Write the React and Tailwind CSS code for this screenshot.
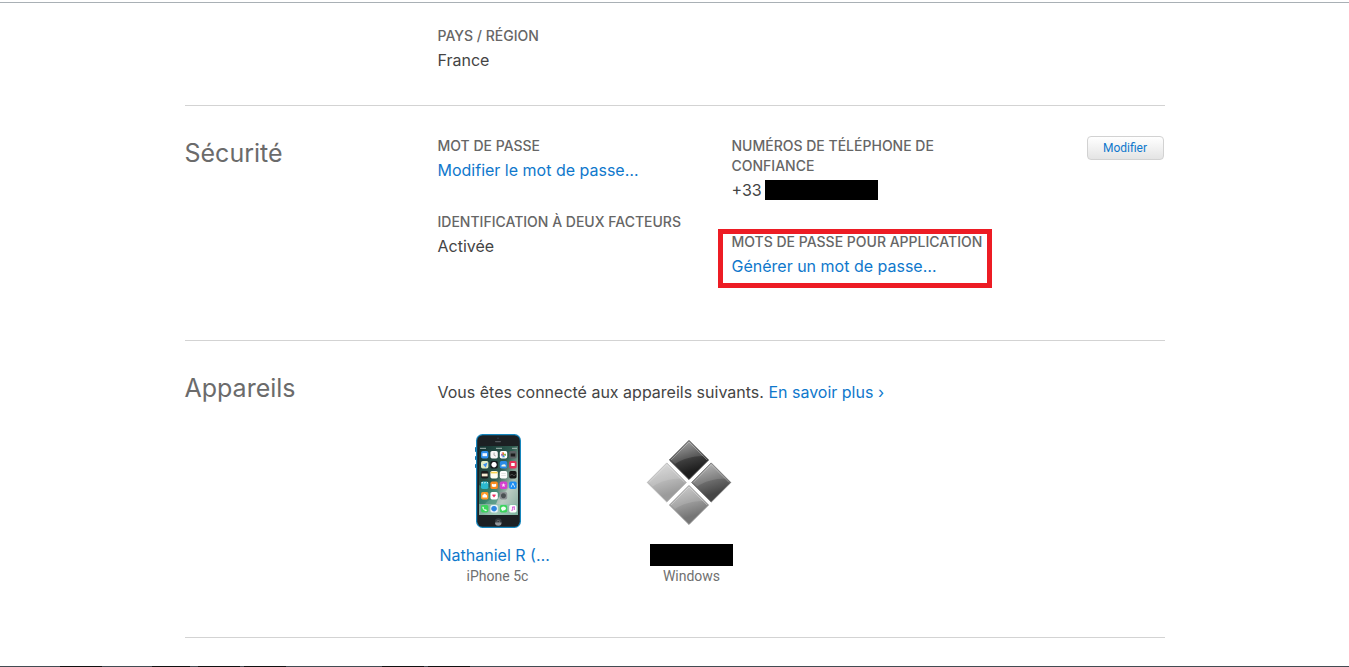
const appIcons = [
  // row 1
  { x: 16, y: 26, fill: '#2f8fee', inner: '#f4f8ff', shape: 'M1.5 2.2H6V5.2H1.5Z' },
  { x: 25.4, y: 26, fill: '#f6f6f6', inner: '#8f8f8f', shape: 'M3.4 1.5H4V3.8L5.6 5L5.2 5.5L3.2 4Z' },
  { x: 34.8, y: 26, fill: '#ffffff', inner: '#f0a020', shape: 'M3.7 1L5 3.7L3.7 6.4L2.4 3.7Z' },
  { x: 44.2, y: 26, fill: '#5d6164', inner: '#1c1c1c', shape: 'M1.5 2.5H6V5.5H1.5Z' },
  // row 2
  { x: 16, y: 36, fill: '#dfe9c4', inner: '#3b8ef0', shape: 'M2 3.5L6.5 1.5L4.8 6.5Z' },
  { x: 25.4, y: 36, fill: '#15191c', inner: '#ffffff', shape: 'M3.7 1A2.7 2.7 0 1 1 3.6 1Z' },
  { x: 34.8, y: 36, fill: '#2a8be8', inner: '#f4f6e4', shape: 'M1.5 5.5Q1.5 3.5 3.2 3.6Q5.8 2.4 6.2 5.5Z' },
  { x: 44.2, y: 36, fill: '#e8305a', inner: '#ffffff', shape: 'M2 2H5.5V5H2Z' },
  // row 3
  { x: 16, y: 46, fill: '#1c1c1c', inner: '#f3ead0', shape: 'M0.8 2.6H6.6V5.4H0.8Z' },
  { x: 25.4, y: 46, fill: '#fffdf0', inner: '#f6d14f', shape: 'M0.3 0.8H7.1V2.4H0.3Z' },
  { x: 34.8, y: 46, fill: '#fdfdfd', inner: '#c9c9c9', shape: 'M1.5 2H6V2.5H1.5ZM1.5 4.5H6V5H1.5Z' },
  { x: 44.2, y: 46, fill: '#161616', inner: '#7b7b7b', shape: 'M0.8 4L3 3.2L5 4.4L6.6 3V3.6L5 5L3 3.8L0.8 4.6Z' },
  // row 4
  { x: 16, y: 56.5, fill: '#2cb9cf', inner: '#eef7f8', shape: 'M0.5 0.6H2L1 2.4ZM3.4 0.6H4.8L3.8 2.4ZM6 0.6H7L6.2 2.4Z' },
  { x: 25.4, y: 56.5, fill: '#fb8a1c', inner: '#ffffff', shape: 'M1.4 2.2L3.5 2.8L5.8 2.2V5L3.5 5.6L1.4 5Z' },
  { x: 34.8, y: 56.5, fill: '#d63fd0', inner: '#fbe9fa', shape: 'M3.7 1.5L4.3 3H5.8L4.6 4L5 5.6L3.7 4.7L2.4 5.6L2.8 4L1.6 3H3.1Z' },
  { x: 44.2, y: 56.5, fill: '#1b8df3', inner: '#e7f4ff', shape: 'M3.4 1.4H4L6 5.8H5.2L3.7 2.6L2.2 5.8H1.4Z' },
  // row 5
  { x: 16, y: 67, fill: '#fd9b2a', inner: '#ffffff', shape: 'M3.7 1.6L6 3.4V5.6H1.4V3.4Z' },
  { x: 25.4, y: 67, fill: '#ffffff', inner: '#f02f62', shape: 'M3.6 5.6L1.8 3.2Q2.6 1.6 3.6 2.9Q4.8 1.6 5.4 3.2Z' },
  { x: 34.8, y: 67, fill: '#8d9194', inner: '#4b5053', shape: 'M3.7 1.2A2.5 2.5 0 1 1 3.6 1.2Z' },
  // dock
  { x: 16, y: 80, fill: '#3bd45c', inner: '#f2fff4', shape: 'M2 1.4L3 2.8L2.6 3.4L4 4.8L4.7 4.3L6 5.3L5 6.2Q2 5.7 1.3 2.3Z' },
  { x: 25.4, y: 80, fill: '#e9f4fb', inner: '#2f86e0', shape: 'M3.7 0.9A2.8 2.8 0 1 1 3.6 0.9Z' },
  { x: 34.8, y: 80, fill: '#3bd45c', inner: '#f2fff4', shape: 'M1.2 3.5Q1.3 1.6 3.7 1.5Q6.1 1.6 6.2 3.5Q6 5.4 3.7 5.5L2 6L2.2 5Q1.3 4.5 1.2 3.5Z' },
  { x: 44.2, y: 80, fill: '#ffffff', inner: '#d45ad8', shape: 'M2.8 1.8L5.6 1.2V5H4.5V2.5L3.6 2.7V5.8H2.1V4.8H2.8Z' },
];

const tiles = [
  { id: 'top', x: 54, y: 30, from: '#8a8a8a', mid: '#3c3c3c', to: '#1e1e1e' },
  { id: 'left', x: 31.8, y: 52.5, from: '#cfcfcf', mid: '#b4b4b4', to: '#9b9b9b' },
  { id: 'right', x: 76.2, y: 52.5, from: '#a2a2a2', mid: '#686868', to: '#464646' },
  { id: 'bottom', x: 54, y: 75, from: '#bdbdbd', mid: '#969696', to: '#757575' },
];

// Dark marks on the bar at the bottom edge
const barMarks = [
  'ml-[60px] w-[42px]',
  'ml-[50px] w-[38px]',
  'ml-2 w-[42px]',
  'ml-1 w-[42px]',
  'ml-24 w-[42px]',
  'ml-1 w-[42px]',
];

function PhoneImage() {
  return (
    <svg viewBox="0 0 66 110" className="h-[110px] w-[66px]" role="img" aria-label="iPhone 5c">
      <defs>
        <linearGradient id="wallpaper" x1="0" y1="0" x2="1" y2="1">
          <stop offset="0" stopColor="#12302f" />
          <stop offset="0.45" stopColor="#2f5c50" />
          <stop offset="0.7" stopColor="#a9beb4" />
          <stop offset="1" stopColor="#3f7f6b" />
        </linearGradient>
      </defs>
      <g fill="#176fa3">
        <rect x="10" y="22" width="2" height="5" rx="0.7" />
        <rect x="10" y="31" width="2" height="4" rx="0.7" />
        <rect x="10" y="39" width="2" height="4" rx="0.7" />
      </g>
      <rect x="11" y="9" width="45" height="94" rx="6.5" fill="#1686bd" />
      <rect x="12.2" y="10.2" width="42.6" height="91.6" rx="5.5" fill="#1c2023" />
      <circle cx="33" cy="13.3" r="0.7" fill="#35445c" />
      <rect x="30" y="16" width="6" height="1.2" rx="0.6" fill="#50555a" />
      <rect x="14" y="21" width="39" height="69" fill="url(#wallpaper)" />
      <path d="M20 79C28 70 34 76 41 66S50 63 53 58V79Z" fill="#d5ddd7" opacity="0.45" />
      <path d="M14 60C25 66 29 58 35 69L31 79H14Z" fill="#3b9176" opacity="0.65" />
      <rect x="14" y="79" width="39" height="11" fill="#9fd1bb" opacity="0.65" />
      <path d="M15 23.3H21M31 23.3H37M47 23.3H52" stroke="#c5d4d1" strokeWidth="0.8" />
      {appIcons.map((icon) => (
        <g key={`${icon.x}-${icon.y}`} transform={`translate(${icon.x} ${icon.y})`}>
          <rect width="7.4" height="7.4" rx="1.7" fill={icon.fill} />
          <path d={icon.shape} fill={icon.inner} />
        </g>
      ))}
      {/* photos petals */}
      <path d="M38.5 29.7L36 28.4L36.6 31.6Z" fill="#8b50b0" />
      <path d="M38.5 29.7L41 28.4L40.8 31Z" fill="#64b445" />
      <path d="M38.5 29.7L37 32.3H40Z" fill="#3a8fd8" />
      <path d="M38.5 29.7L36.6 27.4H38.4Z" fill="#e0443a" />
      <circle cx="33.3" cy="96.5" r="3.3" fill="#353a3e" />
      <path d="M30 97.5H36.6A3.3 3.3 0 0 1 30 97.5Z" fill="#92979b" />
      <rect x="32" y="95.5" width="2.6" height="2.6" rx="0.6" fill="none" stroke="#888d91" strokeWidth="0.5" />
    </svg>
  );
}

function BootCampImage() {
  return (
    <svg viewBox="2 -5 110 110" className="size-[110px]" role="img" aria-label="Windows">
      <defs>
        {tiles.map((tile) => (
          <linearGradient key={tile.id} id={`tile-${tile.id}`} x1="0.3" y1="0" x2="0.6" y2="1">
            <stop offset="0.1" stopColor={tile.from} />
            <stop offset="0.5" stopColor={tile.mid} />
            <stop offset="0.8" stopColor={tile.to} />
          </linearGradient>
        ))}
      </defs>
      {tiles.map((tile) => (
        <g key={tile.id} transform={`translate(${tile.x} ${tile.y})`}>
          <path
            d="M0-19.6 19.6 0 0 19.6-19.6 0Z"
            fill={`url(#tile-${tile.id})`}
            stroke={tile.mid}
            strokeWidth="0.8"
            strokeLinejoin="round"
          />
          <path d="M0-18-18 0-14 4C-7-1 3-4 15-4Z" fill="#ffffff" opacity="0.12" />
          <path d="M-18 0 0-18 18 0" fill="none" stroke="#ffffff" strokeWidth="0.8" opacity="0.4" />
        </g>
      ))}
    </svg>
  );
}

function Field({ label, children }) {
  return (
    <div>
      <h3 className="text-sm leading-5 font-medium text-[#666666]">{label}</h3>
      <div className="text-base leading-7 text-[#444444]">{children}</div>
    </div>
  );
}

function Section({ title, className, children }) {
  return (
    <section className={`flex border-b border-[#d3d3d3] ${className}`}>
      <div className="w-[253px] shrink-0">
        {title && <h2 className="text-[25px] leading-[34px] text-[#6b6b6b]">{title}</h2>}
      </div>
      {children}
    </section>
  );
}

export default function App() {
  return (
    <div className="flex min-h-screen flex-col bg-white pt-0.5 font-[Inter,'Liberation_Sans',sans-serif]">
      <div className="h-px bg-[#a9b0b5]" />

      <main className="mx-auto w-full max-w-[980px] flex-1">
        <Section className="pt-[23px] pb-[31px]">
          <Field label="PAYS / RÉGION">France</Field>
        </Section>

        {/* Sécurité */}
        <Section title="Sécurité" className="pt-[30px] pb-[60px]">
          <div className="flex w-[294px] shrink-0 flex-col gap-7">
            <Field label="MOT DE PASSE">
              <a href="#password" className="text-[#0f78cc]">Modifier le mot de passe…</a>
            </Field>
            <Field label="IDENTIFICATION À DEUX FACTEURS">Activée</Field>
          </div>

          <div className="flex w-[252px] shrink-0 flex-col gap-7">
            <Field label="NUMÉROS DE TÉLÉPHONE DE CONFIANCE">
              <span className="flex items-center gap-[3px]">
                +33
                <span className="h-5 w-[113px] bg-black" />
              </span>
            </Field>
            <div className="relative">
              <Field label="MOTS DE PASSE POUR APPLICATION">
                <a href="#app-password" className="text-[#0f78cc]">Générer un mot de passe…</a>
              </Field>
              <div className="pointer-events-none absolute -top-[3px] -right-2 -bottom-2 -left-3.5 border-5 border-[#ed1c24]" />
            </div>
          </div>

          <div className="flex flex-1 items-start justify-end pr-px">
            <button
              type="button"
              className="h-6 w-[77px] rounded border border-[#d2d2d2] bg-linear-to-b from-white to-[#e4e4e4] font-[Roboto,sans-serif] text-xs text-[#0f78cc]"
            >
              Modifier
            </button>
          </div>
        </Section>

        {/* Appareils */}
        <Section title="Appareils" className="pt-[30px] pb-[52px]">
          <div className="pt-[7px]">
            <p className="text-base leading-7 text-[#444444]">
              Vous êtes connecté aux appareils suivants.{' '}
              <a href="#more" className="text-[#0f78cc]">En savoir plus ›</a>
            </p>

            <ul className="flex gap-[74px] pt-[19px]">
              <li className="flex w-[120px] flex-col items-center">
                <PhoneImage />
                <a href="#iphone" className="self-start px-0.5 pt-2 text-base leading-6 text-[#0f78cc]">
                  Nathaniel R (…
                </a>
                <span className="font-[Roboto,sans-serif] text-sm leading-[18px] text-[#707070]">iPhone 5c</span>
              </li>
              <li className="flex w-[120px] flex-col items-center">
                <BootCampImage />
                <span className="mt-[9px] h-[22px] w-[83px] bg-black" />
                <span className="pt-px font-[Roboto,sans-serif] text-sm leading-[18px] text-[#707070]">Windows</span>
              </li>
            </ul>
          </div>
        </Section>
      </main>

      <div className="flex h-px bg-[#434b52]">
        {barMarks.map((mark, index) => (
          <div key={index} className={`bg-[#111111] ${mark}`} />
        ))}
      </div>
    </div>
  );
}
